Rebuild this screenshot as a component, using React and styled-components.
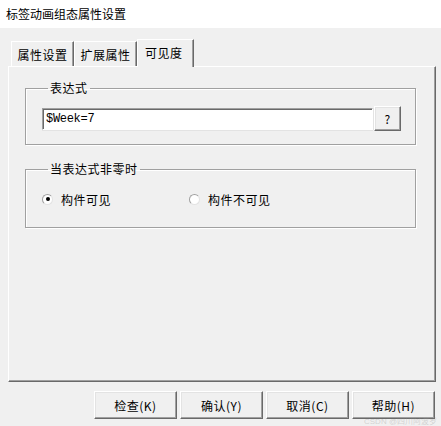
import React from "react";
import styled, { createGlobalStyle } from "styled-components";

const Global = createGlobalStyle`
  html, body { margin: 0; padding: 0; background: #f0f0f0; }
  body { font-family: "Noto Sans CJK SC", "Noto Sans", sans-serif; font-size: 12px; color: #000; }
  * { box-sizing: border-box; }
`;

const Window = styled.div`
  width: 441px;
  height: 426px;
  display: flex;
  flex-direction: column;
  background: #f0f0f0;
  position: relative;
  overflow: hidden;
`;

const TitleBar = styled.div`
  height: 28px;
  background: #fff;
  display: flex;
  align-items: center;
  padding-left: 6px;
  font-size: 12px;
  line-height: 14px;
`;

const TabRow = styled.div`
  display: flex;
  align-items: flex-end;
  margin-top: 11px;
  padding-left: 11px;
  height: 27px;
`;

const Tab = styled.div`
  width: ${(p) => p.$w}px;
  height: ${(p) => (p.$active ? 28 : 25)}px;
  margin-bottom: ${(p) => (p.$active ? -1 : 0)}px;
  background: #f0f0f0;
  border-top: 1px solid #fff;
  border-left: 1px solid #fff;
  border-right: 1px solid #696969;
  box-shadow: inset -1px 0 0 #a0a0a0;
  display: flex;
  align-items: center;
  justify-content: ${(p) => (p.$active ? "flex-start" : "center")};
  padding-left: ${(p) => (p.$active ? 7 : 0)}px;
  padding-bottom: ${(p) => (p.$active ? 3 : 0)}px;
  font-size: 12px;
  letter-spacing: 0.5px;
  position: relative;
  z-index: ${(p) => (p.$active ? 2 : 1)};
`;

const Panel = styled.div`
  margin-left: 8px;
  width: 428px;
  height: 316px;
  border-top: 1px solid #fff;
  border-left: 1px solid #fff;
  border-right: 1px solid #696969;
  border-bottom: 1px solid #696969;
  box-shadow: inset -1px -1px 0 #a0a0a0;
  padding: 14px 19px 0 16px;
  display: flex;
  flex-direction: column;
  gap: 17px;
`;

const Group = styled.fieldset`
  margin: 0;
  border: 1px solid #a0a0a0;
  box-shadow: 1px 1px 0 #fff, inset 1px 1px 0 #fff;
  padding: ${(p) => p.$pad};
  min-width: 0;
`;

const Legend = styled.legend`
  margin-left: 6px;
  padding: 0 2px;
  font-size: 12px;
  line-height: 14px;
  letter-spacing: 0.5px;
`;

const InputRow = styled.div`
  display: flex;
  align-items: center;
  gap: 1px;
`;

const TextField = styled.div`
  width: 331px;
  height: 22px;
  background: #fff;
  border-top: 1px solid #a0a0a0;
  border-left: 1px solid #a0a0a0;
  border-right: 1px solid #fff;
  border-bottom: 1px solid #fff;
  box-shadow: inset 1px 1px 0 #696969, 0 1px 0 #e3e3e3, 1px 0 0 #e3e3e3;
  display: flex;
  align-items: center;
  padding-left: 3px;
  font-family: "Liberation Mono", "DejaVu Sans Mono", monospace;
  font-size: 12px;
  letter-spacing: -0.3px;
`;

const Button = styled.div`
  width: ${(p) => p.$w}px;
  height: ${(p) => p.$h}px;
  background: #f0f0f0;
  border-top: 1px solid #fff;
  border-left: 1px solid #fff;
  border-right: 1px solid #696969;
  border-bottom: 1px solid #696969;
  box-shadow: inset -1px -1px 0 #a0a0a0, inset 1px 1px 0 #e3e3e3;
  display: flex;
  align-items: center;
  justify-content: center;
  font-size: 12px;
  letter-spacing: 0.5px;
`;

const RadioRow = styled.div`
  display: grid;
  grid-template-columns: 147px 1fr;
`;

const RadioItem = styled.div`
  display: flex;
  align-items: center;
  gap: 8px;
  height: 14px;
  font-size: 12px;
  letter-spacing: 0.5px;
`;

const RadioDot = styled.span`
  width: 11px;
  height: 11px;
  border-radius: 50%;
  background: #fff;
  border: 1px solid;
  border-color: #a0a0a0 #e3e3e3 #e3e3e3 #a0a0a0;
  display: flex;
  align-items: center;
  justify-content: center;
  &::after {
    content: "";
    width: 4px;
    height: 4px;
    border-radius: 50%;
    background: ${(p) => (p.$on ? "#000" : "transparent")};
  }
`;

const ButtonBar = styled.div`
  display: flex;
  justify-content: flex-end;
  gap: 3px;
  padding-right: 6px;
  margin-top: 9px;
`;

const Watermark = styled.div`
  position: absolute;
  right: 4px;
  bottom: 0;
  font-family: "Liberation Sans", "Noto Sans CJK SC", sans-serif;
  font-size: 8px;
  line-height: 9px;
  color: rgba(150, 150, 150, 0.35);
`;

export default function App() {
  return (
    <>
      <Global />
      <Window>
        <TitleBar>标签动画组态属性设置</TitleBar>
        <TabRow>
          <Tab $w={63}>属性设置</Tab>
          <Tab $w={63}>扩展属性</Tab>
          <Tab $w={57} $active>可见度</Tab>
        </TabRow>
        <Panel>
          <Group $pad="11px 14px 13px 16px">
            <Legend>表达式</Legend>
            <InputRow>
              <TextField>$Week=7</TextField>
              <Button $w={27} $h={25}>?</Button>
            </InputRow>
          </Group>
          <Group $pad="16px 14px 21px 16px">
            <Legend>当表达式非零时</Legend>
            <RadioRow>
              <RadioItem>
                <RadioDot $on />
                构件可见
              </RadioItem>
              <RadioItem>
                <RadioDot />
                构件不可见
              </RadioItem>
            </RadioRow>
          </Group>
        </Panel>
        <ButtonBar>
          <Button $w={83} $h={28}>检查(K)</Button>
          <Button $w={83} $h={28}>确认(Y)</Button>
          <Button $w={83} $h={28}>取消(C)</Button>
          <Button $w={83} $h={28}>帮助(H)</Button>
        </ButtonBar>
        <Watermark>CSDN @四川阿波罗</Watermark>
      </Window>
    </>
  );
}
